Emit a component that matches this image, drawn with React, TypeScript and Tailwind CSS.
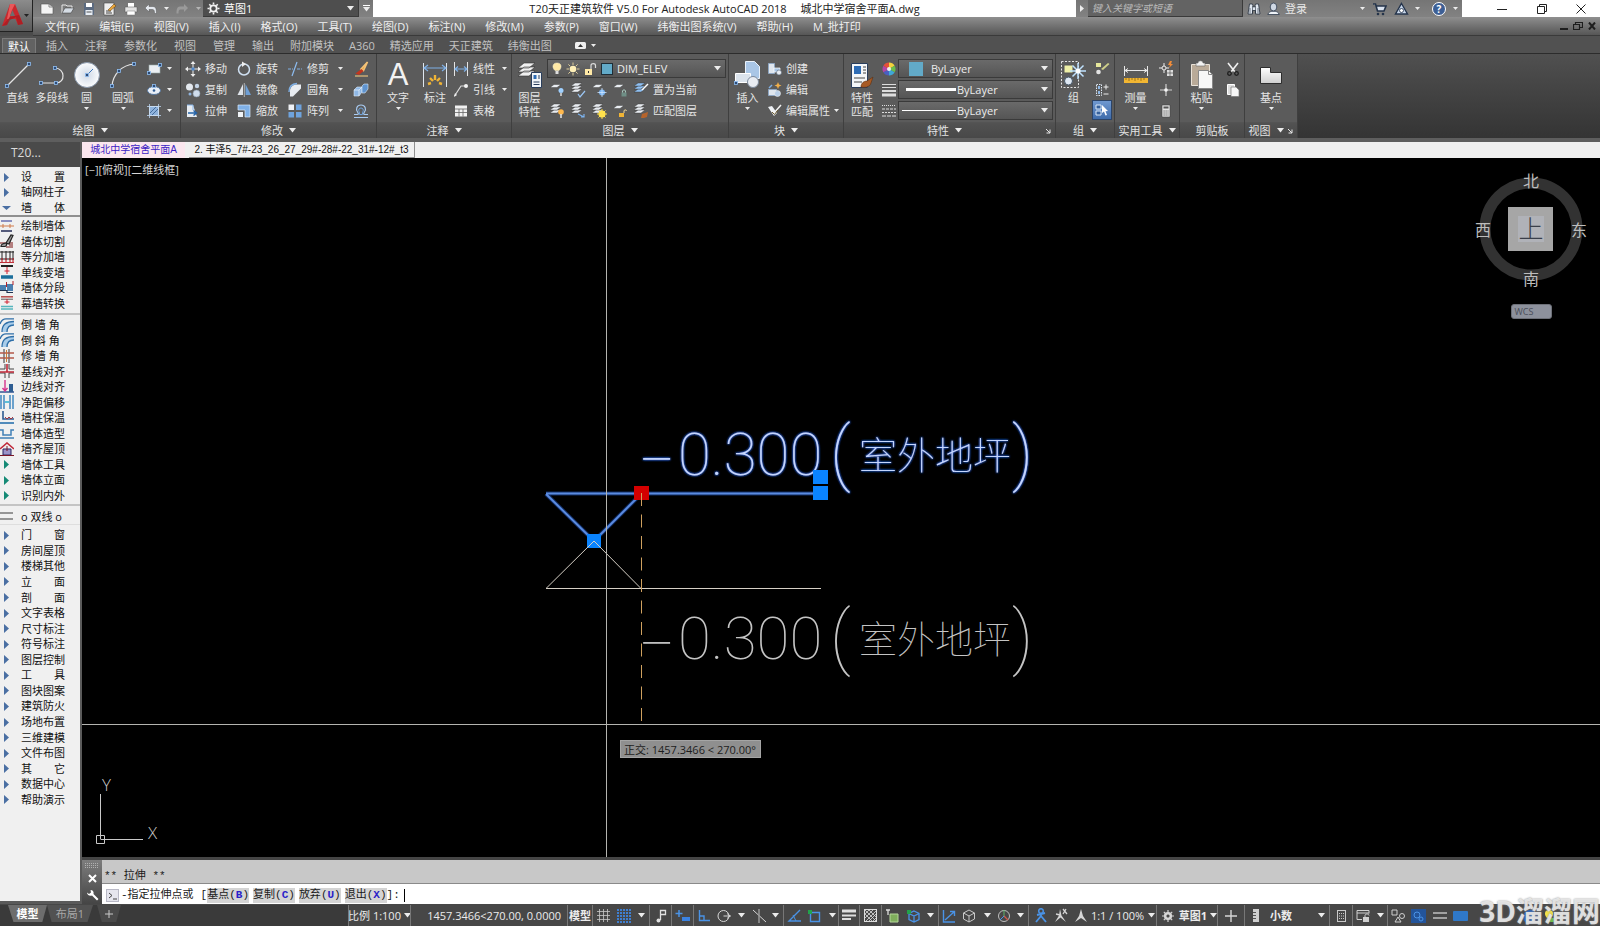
import React from "react";

type Kids = { children?: React.ReactNode };

const CJK = "font-['Open_Sans','Noto_Sans_CJK_SC',sans-serif]";

function Svg({ w = 16, h = 16, vb, children }: Kids & { w?: number; h?: number; vb?: string }) {
  return (
    <svg width={w} height={h} viewBox={vb ?? `0 0 ${w} ${h}`} fill="none" className="shrink-0" aria-hidden="true">
      {children}
    </svg>
  );
}

function Caret({ big = false, color = "#ececec" }: { big?: boolean; color?: string }) {
  return big ? (
    <Svg w={7} h={5}><path d="M0 0h7L3.500 4.500z" fill={color} /></Svg>
  ) : (
    <Svg w={5} h={3}><path d="M0 0h5L2.500 3z" fill={color} /></Svg>
  );
}

/* ---------- quick access and title icons ---------- */

const IcNew = <Svg w={14} h={14}><path d="M1 2h8l4 3v7H1z" fill="#f4f4f4" stroke="#555" strokeWidth=".6" /><path d="M9 2v3h4" stroke="#888" /></Svg>;
const IcOpen = <Svg w={14} h={14}><path d="M1 11V3h4l1 1h5v2" stroke="#e8e8e8" /><path d="M1 11l3-5h9l-3 5z" fill="#d5dce4" stroke="#333" strokeWidth=".5" /></Svg>;
const IcSave = <Svg w={14} h={14}><path d="M2 1h10v12H2z" fill="#5c6b80" /><path d="M4 1h6v4H4z" fill="#fff" /><path d="M3.500 8h7v5h-7z" fill="#e8eef5" /><path d="M4.500 10h5" stroke="#555" /></Svg>;
const IcSaveAs = <Svg w={14} h={14}><path d="M1 1h10v12H1z" fill="#eee" stroke="#444" strokeWidth=".6" /><path d="M3 9h5M3 11h6" stroke="#444" /><path d="M5 8l6-6 2 2-6 5z" fill="#e8a43a" stroke="#5b3b10" strokeWidth=".5" /></Svg>;
const IcPrint = <Svg w={14} h={14}><path d="M4 1h6v4H4z" fill="#fff" /><path d="M1 5h12v5H1z" fill="#e3e3e3" stroke="#555" strokeWidth=".5" /><path d="M3 9h8v4H3z" fill="#fff" stroke="#777" strokeWidth=".5" /></Svg>;
const IcUndo = <Svg w={14} h={12}><path d="M1 5l4-4v2.500h4c3 0 3.500 3 3.500 7h-2c0-3-.5-4-2-4H5V9z" fill="#e4e8ee" stroke="#555" strokeWidth=".5" /></Svg>;
const IcRedo = <Svg w={14} h={12}><path d="M13 5L9 1v2.500H5c-3 0-3.500 3-3.500 7h2c0-3 .5-4 2-4H9V9z" fill="#9a9a9a" /></Svg>;
const IcGear = (
  <Svg w={13} h={13}>
    <circle cx="6.500" cy="6.500" r="3.200" stroke="#f2f2f2" strokeWidth="1.800" />
    <path d="M6.500 .5v2M6.500 10.500v2M.5 6.500h2M10.500 6.500h2M2.300 2.300l1.400 1.400M9.300 9.300l1.400 1.400M10.700 2.300L9.300 3.700M3.700 9.300l-1.400 1.400" stroke="#f2f2f2" strokeWidth="1.600" />
  </Svg>
);
const IcBinoc = <Svg w={14} h={14}><path d="M2.500 2h3l.8 3h1.400l.8-3h3l1.500 10H8.500V8.500h-3V12H1z" fill="#dfe6ef" stroke="#26303d" strokeWidth=".8" /><path d="M5.500 4v7M8.500 4v7M3 6v5M11 6v5" stroke="#26303d" strokeWidth=".6" /></Svg>;
const IcUser = <Svg w={13} h={14}><ellipse cx="6.500" cy="5" rx="3.300" ry="4" fill="#cfd8e4" stroke="#2d3a4c" strokeWidth=".8" /><path d="M.8 12.500c.5-2 2.500-3 4-3.200h3.400c1.500.2 3.500 1.200 4 3.200z" fill="#eef2f7" stroke="#2d3a4c" strokeWidth=".8" /></Svg>;
const IcCart = <Svg w={15} h={14}><path d="M1 2h2.500l2 7h6.500l2-5H4.500" stroke="#243349" strokeWidth="1.600" fill="#d9e2ee" /><circle cx="6" cy="12" r="1.300" fill="#243349" /><circle cx="11" cy="12" r="1.300" fill="#243349" /></Svg>;
const IcA360 = <Svg w={15} h={14}><path d="M7.500 1.500L13.500 12h-12z" stroke="#24344c" strokeWidth="1.400" fill="#c7d6ea" /><circle cx="7.500" cy="8.500" r="2" fill="#fff" stroke="#24344c" strokeWidth=".8" /></Svg>;
const IcHelp = <span className="flex size-[14px] items-center justify-center rounded-full border border-white bg-[#3d5f95] text-[10px] font-bold leading-none text-white">?</span>;

function QA({ w, label, children }: Kids & { w: string; label: string }) {
  return (
    <button aria-label={label} className={`flex h-full shrink-0 items-center justify-center ${w}`}>
      {children}
    </button>
  );
}

const MENUS = ["文件(F)", "编辑(E)", "视图(V)", "插入(I)", "格式(O)", "工具(T)", "绘图(D)", "标注(N)", "修改(M)", "参数(P)", "窗口(W)", "纬衡出图系统(V)", "帮助(H)", "M_批打印"];

function Header() {
  return (
    <header className="flex h-9 shrink-0 bg-[#4b4b4b]">
      <button aria-label="应用程序菜单" className="flex h-8 w-[33px] shrink-0 items-center gap-px border-r border-b border-[#222] bg-linear-to-b from-[#8c8c8c] to-[#5a5a5a] pl-px">
        <Svg w={22} h={26}>
          <path d="M1 23L9 1h5l8 20-5 1-2.500-6H8l-2 6z" fill="#c8282d" />
          <path d="M9 1h5l-3 6-3 9H6z" fill="#e8585a" />
          <path d="M11.500 7l2.500 6H9z" fill="#6e6e6e" />
          <path d="M1 23l5-1 3-5 6-3 2 8 5-1-4-9-9 2z" fill="#a3191f" opacity=".65" />
        </Svg>
        <Caret color="#222" />
      </button>
      <div className="flex min-w-0 flex-1 flex-col">
        <div className="flex h-[17px] bg-white">
          <div className="flex w-[340px] shrink-0 items-center bg-linear-to-b from-[#757575] to-[#828282] pl-1">
            <QA w="w-5" label="新建">{IcNew}</QA>
            <QA w="w-[22px]" label="打开">{IcOpen}</QA>
            <QA w="w-5" label="保存">{IcSave}</QA>
            <QA w="w-[22px]" label="另存为">{IcSaveAs}</QA>
            <QA w="w-5" label="打印">{IcPrint}</QA>
            <QA w="w-5" label="放弃">{IcUndo}</QA>
            <QA w="w-[10px]" label="放弃列表"><Caret /></QA>
            <QA w="w-[22px]" label="重做">{IcRedo}</QA>
            <QA w="w-[10px]" label="重做列表"><Caret color="#b5b5b5" /></QA>
            <div className="flex h-full flex-1 items-center gap-1 border-r border-b border-[#3a3a3a] bg-[#4e4e4e] pr-1 pl-1">
              {IcGear}
              <select aria-label="工作空间" className="min-w-0 flex-1 appearance-none bg-transparent text-[11px] leading-none text-white">
                <option>草图1</option>
              </select>
              <Caret big />
            </div>
            <QA w="w-[14px]" label="自定义快速访问工具栏">
              <span className="flex flex-col items-center gap-px"><span className="h-px w-[7px] bg-white" /><Caret big /></span>
            </QA>
          </div>
          <h1 className="flex min-w-0 flex-1 items-center justify-center gap-[14px] overflow-hidden text-[11px] leading-none whitespace-nowrap text-[#222]">
            <span>T20天正建筑软件 V5.0 For Autodesk AutoCAD 2018</span>
            <span>城北中学宿舍平面A.dwg</span>
          </h1>
          <div className="flex w-[386px] shrink-0 items-center bg-linear-to-b from-[#757575] to-[#828282] text-[11px] text-[#e8e8e8]">
            <QA w="w-3" label="收拢搜索"><Svg w={4} h={7}><path d="M0 0l4 3.500L0 7z" fill="#eee" /></Svg></QA>
            <input aria-label="搜索" placeholder="键入关键字或短语" className="h-full w-[155px] border-r border-b border-[#3a3a3a] bg-[#636363] px-1 text-[10px] italic placeholder:text-[#b9b9b9]" />
            <QA w="w-[22px]" label="查找">{IcBinoc}</QA>
            <button className="flex h-full w-[100px] items-center gap-[5px] pl-0.5 leading-none">{IcUser}<span className="flex-1 text-left">登录</span><Caret /></button>
            <QA w="w-7" label="应用商店">{IcCart}</QA>
            <QA w="w-[16px]" label="A360">{IcA360}</QA>
            <QA w="w-[16px]" label="A360 列表"><Caret /></QA>
            <QA w="w-7" label="帮助">{IcHelp}</QA>
            <Caret />
          </div>
          <div className="flex w-[138px] shrink-0 items-center justify-between bg-white pr-[14px] pl-[35px]">
            <button aria-label="最小化"><Svg w={10} h={10}><path d="M0 5.500h10" stroke="#222" /></Svg></button>
            <button aria-label="还原"><Svg w={10} h={10}><path d="M.5 2.500h7v7h-7zM2.500 2.500v-2h7v7h-2" stroke="#222" /></Svg></button>
            <button aria-label="关闭"><Svg w={10} h={10}><path d="M.5 .5l9 9M9.500 .5l-9 9" stroke="#222" /></Svg></button>
          </div>
        </div>
        <nav className="flex h-[19px] items-center gap-5 border-b border-[#3a3a3a] bg-linear-to-b from-[#8f8f8f] to-[#565656] pl-3 text-[11px] leading-none whitespace-nowrap text-[#f0f0f0]">
          {MENUS.map((m) => (<button key={m} className="leading-none">{m}</button>))}
          <div className="ml-auto flex items-center gap-[5px] pr-1">
            <button aria-label="最小化图形"><Svg w={9} h={9}><path d="M1 7h8" stroke="#1e1e1e" strokeWidth="2" /></Svg></button>
            <button aria-label="还原图形"><Svg w={10} h={10}><path d="M.5 3.500h6v5h-6zM2.500 3.500v-2h7v5h-3" stroke="#1e1e1e" strokeWidth="1.200" /></Svg></button>
            <button aria-label="关闭图形"><Svg w={8} h={8}><path d="M1 .5l6 7M7 .5l-6 7" stroke="#1e1e1e" strokeWidth="2" /></Svg></button>
          </div>
        </nav>
      </div>
    </header>
  );
}

/* ---------- ribbon ---------- */

const TABS = ["插入", "注释", "参数化", "视图", "管理", "输出", "附加模块", "A360", "精选应用", "天正建筑", "纬衡出图"];

function RibbonTabs() {
  return (
    <div role="tablist" className="flex h-[18px] shrink-0 items-end border-b border-[#2c2c2c] bg-[#515151] pl-0.5 text-[11px] leading-none whitespace-nowrap text-[#c2c2c2]">
      <button role="tab" aria-selected="true" className="flex h-[15px] w-[34px] items-center justify-center border border-b-0 border-[#7a7a7a] bg-[#626262] text-white">默认</button>
      <div className="flex h-[15px] items-center gap-[15px] pl-[10px]">
        {TABS.map((t) => (<button key={t} role="tab" aria-selected="false" className="px-px leading-none first:pl-0">{t}</button>)).slice(0, 6)}
        {TABS.slice(6).map((t) => (<button key={t} role="tab" aria-selected="false" className="leading-none">{t}</button>))}
        <button aria-label="最小化功能区" className="flex items-center gap-[5px] pl-2">
          <Svg w={11} h={7}><rect width="11" height="7" rx="1.500" fill="#f0f0f0" /><path d="M3 5l2.500-3L8 5z" fill="#333" /></Svg>
          <Caret />
        </button>
      </div>
    </div>
  );
}

function Panel({ w, title, caret = true, corner = false, children }: Kids & { w: string; title: string; caret?: boolean; corner?: boolean }) {
  return (
    <section aria-label={title} className={`flex shrink-0 flex-col border-r border-[#3f3f3f] bg-[#5b5b5b] ${w}`}>
      <div className="flex h-[68px] pt-1">{children}</div>
      <div className="flex h-4 items-center border-t border-[#545454] bg-linear-to-b from-[#525252] to-[#484848] text-[11px] leading-none text-[#e4e4e4]">
        <span className="flex flex-1 items-center justify-center gap-[6px] whitespace-nowrap">{title}{caret && <Caret big />}</span>
        {corner && <button aria-label={`${title}设置`} className="pr-1"><Svg w={6} h={6}><path d="M1 1l4 4M5 1.500V5H1.500" stroke="#e8e8e8" /></Svg></button>}
      </div>
    </section>
  );
}

function Big({ w, label, icon, caret = false }: { w: string; label: string[]; icon: React.ReactNode; caret?: boolean }) {
  return (
    <button className={`flex shrink-0 flex-col items-center text-[11px] leading-[14px] text-[#e6e6e6] ${w}`}>
      <span className="flex h-[33px] items-center justify-center">{icon}</span>
      {label.map((l) => (<span key={l} className="whitespace-nowrap">{l}</span>))}
      {caret && <span className="pt-[2px]"><Caret /></span>}
    </button>
  );
}

function Row({ icon, label, caret = false, w = "" }: { icon: React.ReactNode; label?: string; caret?: boolean; w?: string }) {
  return (
    <button aria-label={label ?? "工具"} className={`flex h-[21px] shrink-0 items-center gap-1 text-[11px] leading-none whitespace-nowrap text-[#e6e6e6] ${w}`}>
      {icon}
      {label && <span>{label}</span>}
      {caret && <span className="ml-auto"><Caret /></span>}
    </button>
  );
}

const Col = ({ w = "", children }: Kids & { w?: string }) => <div className={`flex shrink-0 flex-col ${w}`}>{children}</div>;

const BL = "#7fb0e6";
const grip = (x: number, y: number) => <rect x={x - 1.5} y={y - 1.5} width="3" height="3" fill="#2d4c78" stroke="#8fbdf0" strokeWidth=".8" />;

const BiLine = <Svg w={28} h={28}><path d="M3 25L25 3" stroke="#e4e4e4" strokeWidth="1.200" />{grip(3, 25)}{grip(25, 3)}</Svg>;
const BiPoly = <Svg w={28} h={28}><path d="M3 22h15c10 0 9-15-1-15" stroke="#e4e4e4" strokeWidth="1.200" />{grip(3, 22)}{grip(18, 22)}{grip(17, 7)}</Svg>;
const BiCircle = (
  <Svg w={28} h={28}>
    <defs><radialGradient id="ball"><stop offset="0" stopColor="#cfd9e6" /><stop offset="1" stopColor="#fbfcfd" /></radialGradient></defs>
    <circle cx="14" cy="14" r="12.500" fill="url(#ball)" stroke="#8796aa" />
    <path d="M14 14l6-6" stroke="#3c74b8" />{grip(14, 14)}
  </Svg>
);
const BiArc = <Svg w={28} h={28}><path d="M3 25C4 13 13 4 25 3" stroke="#e4e4e4" strokeWidth="1.200" />{grip(3, 25)}{grip(10, 10)}{grip(25, 3)}</Svg>;
const SiRect = <Svg><rect x="3" y="4" width="11" height="8" fill="#eceff3" stroke="#9aa" strokeWidth=".6" />{grip(3, 12)}{grip(14, 4)}</Svg>;
const SiEllipse = <Svg><ellipse cx="8" cy="8.500" rx="6.500" ry="4" fill="#e8eef6" stroke="#56779f" /><circle cx="8" cy="8.500" r="1.300" fill="#2f5b93" />{grip(8, 4)}</Svg>;
const SiHatch = <Svg><rect x="3.500" y="3.500" width="9" height="9" fill="#8fb3dd" stroke="#e8eef6" /><path d="M1 3.500h14M3.500 1v14M12.500 1v14M1 12.500h14" stroke="#bcd4ef" strokeWidth=".8" /><path d="M4 10l6-6M6 12l6-6" stroke="#325a8c" strokeWidth=".8" /></Svg>;

const SiMove = <Svg><path d="M8 1v14M1 8h14" stroke="#eee" /><path d="M8 0l2.500 3h-5zM8 16l2.500-3h-5zM0 8l3-2.500v5zM16 8l-3-2.500v5z" fill="#eee" /><rect x="6.500" y="6.500" width="3" height="3" fill="#4e86c8" /></Svg>;
const SiRotate = <Svg><circle cx="8" cy="8.500" r="5.500" stroke="#cfe0f2" strokeWidth="1.500" /><path d="M6 .5l4 2.500-4 3z" fill="#eee" /></Svg>;
const SiTrim = <Svg><path d="M1 8h5M10 8h5" stroke="#7fb0e6" strokeWidth="1.200" strokeDasharray="3 1" /><path d="M10 1L5 15" stroke="#8dbcf0" strokeWidth="1.200" /></Svg>;
const SiErase = <Svg><path d="M14.500 1L8 8l2.500 1.500z" fill="#e8a13a" stroke="#f3c277" strokeWidth="1.600" /><path d="M8.500 8l-6 4.500 3.500 1.500 4.500-4z" fill="#c4351d" /><path d="M2 15h13" stroke="#e8c07b" strokeWidth="1.200" /></Svg>;
const SiCopy = <Svg><circle cx="4.500" cy="5" r="3.500" fill="#e4e9ef" /><circle cx="12" cy="4" r="2.200" fill="#c5d4e6" /><circle cx="11.500" cy="11.500" r="3.500" fill="#cfdcec" stroke="#89a" strokeWidth=".6" /><circle cx="5" cy="12" r="1.500" fill="#8fb3dd" /></Svg>;
const SiMirror = <Svg><path d="M7 2v11H1.500z" fill="#dfe4ea" /><path d="M9.500 2v11H15z" fill="#6f9fd4" /><path d="M8.300 1v14" stroke="#eee" strokeWidth=".6" /></Svg>;
const SiFillet = <Svg><path d="M3 14.500V9c0-4 3-6.500 6.500-6.500H14v4L6 14.500z" fill="#e8ecf1" /><path d="M2 10C2 5 5 1.800 10 1.500" stroke={BL} strokeWidth="1.400" /></Svg>;
const SiExplode = <Svg><path d="M1 8l3-3h5v5l-3 4H1z" fill="#8fb8e6" stroke="#dce9f7" strokeWidth=".6" /><path d="M1 8h5v6M6 8l3-3" stroke="#eef5fc" strokeWidth=".7" /><path d="M9 4l2-2h4v5l-3 4H9z" fill="#5f94d0" stroke="#dce9f7" strokeWidth=".6" /></Svg>;
const SiStretch = <Svg><path d="M2 2h6l4 12H2z" fill="#e7ecf2" /><path d="M3 10h8M8.500 7.500l3 2.500-3 2.500" stroke="#2563a8" strokeWidth="1.500" /><path d="M2 2h6v5" stroke="#88b5e8" /></Svg>;
const SiScale = <Svg><path d="M2 2h12v12H9V7H2z" fill="#7fb0e6" stroke="#d9e8f8" strokeWidth=".7" /><path d="M2 9h5v5H2z" fill="#f0f3f6" /></Svg>;
const SiArray = <Svg><path d="M1.500 1.500h5.500v5.500H1.500z" fill="#eef1f5" /><path d="M9 1.500h5.500v5.500H9zM1.500 9h5.500v5.500H1.500zM9 9h5.500v5.500H9z" fill="#6fa3dd" /></Svg>;
const SiOffset = <Svg><path d="M1 14.500h14M1 11.500h3.500c1 0 1-1 .3-2C2 6 4 2 8 2s6 4 3.200 7.500c-.7 1-.7 2 .3 2H15" stroke="#a9cbf1" strokeWidth="1.200" /><path d="M6.500 11.500C7 9 5 8 6 6c.8-1.300 3.200-1.300 4 0 1 2-1 3-.5 5.500z" stroke="#6fa3dd" /></Svg>;

const BiText = <span className="font-['Liberation_Sans',sans-serif] text-[31px] leading-none text-[#f2f2f2]">A</span>;
const BiDim = <Svg w={28} h={28}><path d="M2.500 2v24M25.500 2v24" stroke="#dfe7ef" /><path d="M3 7h22M7 4L3 7l4 3M21 4l4 3-4 3" stroke="#7fb0e6" strokeWidth="1.200" /><path d="M14 14v5M9 17l3 3M19 17l-3 3M7 23l3-1M21 23l-3-1" stroke="#f0b435" strokeWidth="2.400" /></Svg>;
const SiLinear = <Svg><path d="M1.500 1v14M14.500 1v14" stroke="#e4e4e4" /><path d="M2 8h12M5 5.500L2 8l3 2.500M11 5.500L14 8l-3 2.500" stroke="#7fb0e6" strokeWidth="1.200" /></Svg>;
const SiLeader = <Svg><path d="M1.500 14L8 4h4" stroke="#dcdcdc" strokeWidth="1.200" /><path d="M1 15l1-4 2 2z" fill="#eee" /><circle cx="13" cy="4" r="2" fill="#f4f4f4" /></Svg>;
const SiTable = <Svg><path d="M2 2.500h12v11H2z" fill="#f2f2f2" /><path d="M2 6h12M2 9.500h12M6 6v7.500M10 6v7.500" stroke="#666" strokeWidth=".8" /></Svg>;

const sheets = (c: string, dx = 0, dy = 0) => (
  <g fill={c} stroke="#333" strokeWidth=".4">
    <path d={`M${dx} ${dy + 10}l4-3h7l-4 3z`} /><path d={`M${dx} ${dy + 7}l4-3h7l-4 3z`} /><path d={`M${dx} ${dy + 4}l4-3h7l-4 3z`} />
  </g>
);
const BiLayers = (
  <Svg w={28} h={30}>
    <g fill="#f0f0f0" stroke="#333" strokeWidth=".6"><path d="M2 16l6-5h11l-6 5zM2 12l6-5h11l-6 5zM2 8l6-5h11l-6 5z" /></g>
    <path d="M15.500 12.500h10v15h-10z" fill="#f2f5f8" stroke="#2a3e5c" /><path d="M17.500 15h3v4h-3z" fill="#2e6cb5" /><path d="M22 16h2M22 18h2M17.500 22h6M17.500 24.500h6" stroke="#2a3e5c" />
  </Svg>
);
const IcBulb = <Svg w={10} h={14}><path d="M5 1c5 0 5 5 2 7.500H3C0 6 0 1 5 1z" fill="#ffe9a6" stroke="#fff4cf" strokeWidth=".5" /><path d="M3.500 9h3v3h-3z" fill="#ddd" /></Svg>;
const IcSun = <Svg w={14} h={14}><circle cx="7" cy="7" r="3.300" fill="#fff0b8" /><path d="M7 .5v2.500M7 11v2.500M.5 7H3M11 7h2.500M2.400 2.400l1.700 1.700M9.900 9.900l1.700 1.700M11.600 2.400L9.900 4.100M4.100 9.900l-1.700 1.700" stroke="#e0cf9b" /></Svg>;
const IcLock = <Svg w={13} h={14}><path d="M1 7h7v6H1z" fill="#ffe9a6" /><path d="M7 7V3.500c0-2.500 4.500-2.500 4.500 0V6" stroke="#ddd" strokeWidth="1.200" /><path d="M4.500 9v2" stroke="#333" /></Svg>;
const lay = (badge: React.ReactNode, c = "#e9edf2") => <Svg>{sheets(c, 1, 0)}{badge}</Svg>;
const flat = (badge: React.ReactNode) => <Svg><path d="M1 5.500l4-3h7l-4 3z" fill="#e9edf2" stroke="#333" strokeWidth=".4" />{badge}</Svg>;
const L1 = flat(<><circle cx="12" cy="8.500" r="2.500" fill="#9fd0ff" /><path d="M12 11v3" stroke="#ddd" strokeWidth="1.500" /></>);
const L2 = lay(<path d="M8 12l2 3 5-6" stroke="#9cc7f5" strokeWidth="1.200" />);
const L3 = flat(<><circle cx="11" cy="10.500" r="3" fill="#79b4f2" /><path d="M11 6v9M6.500 10.500h9" stroke="#cfe6ff" strokeWidth=".8" /></>);
const L4 = flat(<><path d="M9.500 10.500h5v4h-5z" fill="#6f8f86" /><path d="M10.500 10.500V9c0-1.500 3-1.500 3 0v1.500" stroke="#a8c9bf" /></>);
const L5 = lay(<path d="M9 8l6-6" stroke="#fff" strokeWidth="1.500" />, "#8fc0f2");
const L6 = lay(<><circle cx="12" cy="9" r="2.800" fill="#ffb84d" /><path d="M12 11v4" stroke="#e8e8e8" strokeWidth="1.500" /></>);
const L7 = lay(<path d="M8 11l6 3M14 11v3h-3" stroke="#7db3ee" strokeWidth="1.200" />);
const L8 = lay(<><circle cx="11" cy="11" r="3.500" fill="#ffe14d" /><path d="M11 6v10M6 11h10M7.500 7.500l7 7M14.500 7.500l-7 7" stroke="#ffe14d" /></>);
const L9 = flat(<><path d="M7 10h5v4H7z" fill="#f0b435" /><path d="M12 10V8c0-1.500 2.500-1.500 2.500 0" stroke="#f0d79a" /></>);
const L10 = lay(<path d="M8 15l1-4 6-2-1 5-3 1z" fill="#b5642c" />);

const BiInsert = <Svg w={28} h={30}><path d="M11.500 1.500h9l5 5v12h-14z" fill="#a9c6e6" stroke="#eaf2fb" /><path d="M1.500 13.500h15v9h-15z" fill="#dbe3ec" stroke="#fff" /><circle cx="19" cy="22" r="5.500" fill="#e8ecf2" stroke="#7c8a9c" />{grip(2, 23)}</Svg>;
const SiCreate = <Svg><path d="M2.500 2.500h6v10h-6z" fill="#dfe6ee" stroke="#8ea6c2" /><path d="M8 7h6v4H8z" fill="#a9c6e6" stroke="#fff" strokeWidth=".7" /><circle cx="13" cy="11.500" r="2.500" fill="#e8ecf2" stroke="#567" strokeWidth=".6" /></Svg>;
const SiEdit = <Svg><path d="M2.500 7.500h8v6h-8z" fill="#dfe6ee" stroke="#8ea6c2" /><circle cx="11.500" cy="11.500" r="3" fill="#b9cfe8" stroke="#eee" strokeWidth=".6" /><path d="M12 0l1 2.500 2.500 1L13 4.500 12 7l-1-2.500-2.500-1 2.500-1z" fill="#f2b04a" /><path d="M3 6l3-3" stroke="#7fb0e6" strokeWidth="1.500" /></Svg>;
const SiAttr = <Svg><path d="M2 4l6 9 3-3-5-7z" fill="#eef1f5" /><path d="M5 7l3 3 7-8" stroke="#f4f4f4" strokeWidth="1.500" /><path d="M6 9l2.500 2.500L12 7" stroke="#6c5a2e" /></Svg>;

const BiProps = <Svg w={28} h={30}><path d="M3.500 3.500h16v24h-16z" fill="#f4f6f8" stroke="#2a3e5c" /><path d="M6 6h7v8H6z" fill="#2e6cb5" /><path d="M15 7h3M15 10h3M15 13h3M6 18h11M6 22h8" stroke="#444" /><path d="M13 27c0-4 3-6 6-6l6-4-2 6c-1 4-6 5-10 4z" fill="#a85a24" stroke="#5d2f10" strokeWidth=".6" /></Svg>;
const SiWheel = (
  <Svg w={14} h={14}>
    <path d="M7 7V.5A6.500 6.500 0 0 1 12.600 3.700z" fill="#f3d33c" /><path d="M7 7l5.600-3.300a6.500 6.500 0 0 1 0 6.500z" fill="#6abf4b" /><path d="M7 7l5.600 3.200A6.500 6.500 0 0 1 7 13.500z" fill="#3fa7d6" />
    <path d="M7 7v6.500a6.500 6.500 0 0 1-5.600-3.200z" fill="#4a5fc0" /><path d="M7 7l-5.600 3.300a6.500 6.500 0 0 1 0-6.600z" fill="#b247a8" /><path d="M7 7L1.400 3.700A6.500 6.500 0 0 1 7 .5z" fill="#e4503a" /><circle cx="7" cy="7" r="2" fill="#eee" />
  </Svg>
);
const SiWeights = <Svg w={14} h={14}><path d="M0 1.500h14M0 4.500h14" stroke="#ddd" /><path d="M0 8h14" stroke="#ddd" strokeWidth="2" /><path d="M0 12h14" stroke="#ddd" strokeWidth="3" /></Svg>;
const SiTypes = <Svg w={14} h={14}><path d="M0 1.500h14" stroke="#ddd" strokeDasharray="1 1" /><path d="M0 5h14" stroke="#ddd" strokeDasharray="3 1" /><path d="M0 8.500h14" stroke="#ddd" strokeDasharray="2 1" /><path d="M0 12h14" stroke="#ddd" strokeDasharray="4 1" /></Svg>;

const BiGroup = (
  <Svg w={28} h={30}>
    <path d="M1.500 1.500h17v26h-17z" stroke="#e4e4e4" strokeDasharray="2 1.500" /><path d="M4 5h9v8H4z" fill="#eef0a8" stroke="#555" /><circle cx="8.500" cy="21" r="4" fill="#dfe9f4" stroke="#456" />
    <path d="M18 3v16M10 11h16M12.500 5.500l11 11M23.500 5.500l-11 11" stroke="#bfe2ff" strokeWidth="1.500" /><circle cx="18" cy="11" r="2.500" fill="#fff" />
  </Svg>
);
const SiG1 = <Svg><path d="M2 2h5v4H2z" fill="#e6e79b" /><circle cx="4.500" cy="11" r="2.300" fill="#e4e4e4" /><path d="M7 8l7-6 1.500 1L9 9z" fill="#cfd08a" /></Svg>;
const SiG2 = <Svg><path d="M2.500 2.500h5v11h-5z" stroke="#dfe9f4" strokeDasharray="1.500 1" /><path d="M4 4h2v3H4zM4 9h2v3H4z" fill="#8fb8e6" /><path d="M9.500 5h5M12 2.500v5M9.500 12h5" stroke="#eee" /></Svg>;
const SiG3 = <Svg><path d="M2 3h5v4H2zM2 9h5v4H2z" stroke="#dbe9fa" fill="#35609c" /><path d="M8 3l6 6-2.500.3L13 13l-1.500.5-1.500-4L8 11z" fill="#fff" /></Svg>;
const BiMeasure = <Svg w={28} h={28}><path d="M2.500 5v10M25.500 5v10" stroke="#e8e8e8" /><path d="M3 9.500h22M6 7.500l-3 2 3 2M22 7.500l3 2-3 2" stroke="#e8e8e8" /><path d="M2 17h24v5H2z" fill="#f2b632" /><path d="M4 17v2M7 17v3M10 17v2M13 17v3M16 17v2M19 17v3M22 17v2" stroke="#7d5a10" strokeWidth=".7" /></Svg>;
const SiQuick = <Svg><path d="M6 2v10M1 7h10" stroke="#eee" /><circle cx="6" cy="7" r="2" fill="#5b5b5b" stroke="#eee" /><path d="M12 0l-2 4h2l-1 3 4-4h-2l1-3z" fill="#f08c3a" /><path d="M9 9h6v6H9z" fill="#ddd" /><path d="M9 12h6M12 9v6" stroke="#555" strokeWidth=".7" /></Svg>;
const SiPoint = <Svg><path d="M8 2v12M2 8h12" stroke="#cfcfcf" strokeWidth="1.200" /><circle cx="8" cy="8" r="1.800" fill="#f4f4f4" /></Svg>;
const SiCalc = <Svg><path d="M4 2h8v12H4z" fill="#e4e4e4" stroke="#444" strokeWidth=".6" /><path d="M5.500 3.500h5v2h-5z" fill="#555" /><path d="M5.500 8h5M5.500 10h5M5.500 12h5" stroke="#555" strokeDasharray="1.200 .8" /></Svg>;
const BiPaste = <Svg w={28} h={30}><path d="M3.500 4.500h18v21h-18z" fill="#b9aa98" stroke="#e9e2d8" /><path d="M8 6V3h2c0-3 5-3 5 0h2v3z" fill="#f2f2f2" stroke="#666" strokeWidth=".6" /><path d="M10.500 10.500h10l4 4v14h-14z" fill="#f7f7f7" stroke="#888" /><path d="M20.500 10.500v4h4" stroke="#888" /></Svg>;
const SiCut = <Svg><path d="M3 2l7 9M13 2L6 11" stroke="#f0f0f0" strokeWidth="1.600" /><circle cx="4.500" cy="12.500" r="1.800" stroke="#1e1e1e" strokeWidth="1.300" /><circle cx="11.500" cy="12.500" r="1.800" stroke="#1e1e1e" strokeWidth="1.300" /></Svg>;
const SiClip = <Svg><path d="M2.500 2.500h7v10h-7z" fill="#ddd" stroke="#fff" /><path d="M6 5h5l3 3v6.500H6z" fill="#f7f7f7" stroke="#777" strokeWidth=".7" /></Svg>;
const BiBase = <Svg w={28} h={28}><defs><linearGradient id="bs" x2="0" y2="1"><stop stopColor="#fff" /><stop offset="1" stopColor="#cfcfcf" /></linearGradient></defs><path d="M3.500 6.500h10v5h11v11h-21z" fill="url(#bs)" stroke="#2d2d2d" /></Svg>;

const SEL = "h-[17px] min-w-0 flex-1 appearance-none bg-transparent text-[11px] leading-[17px] text-[#ececec]";
const BOX = "flex h-[19px] w-full items-center border border-[#3a3a3a] bg-linear-to-b from-[#6a6a6a] to-[#555] pr-1";

function Ribbon() {
  return (
    <div className="flex h-[88px] shrink-0 flex-col border-b-4 border-[#5e5e5e] bg-linear-to-b from-[#505050] to-[#343434]">
      <div className="flex flex-1">
        <Panel w="w-[181px]" title="绘图">
          <Big w="w-[35px]" label={["直线"]} icon={BiLine} />
          <Big w="w-[34px]" label={["多段线"]} icon={BiPoly} />
          <Big w="w-[35px]" label={["圆"]} icon={BiCircle} caret />
          <Big w="w-[38px]" label={["圆弧"]} icon={BiArc} caret />
          <Col w="w-[30px] pl-1">
            <Row icon={SiRect} caret /><Row icon={SiEllipse} caret /><Row icon={SiHatch} caret />
          </Col>
        </Panel>
        <Panel w="w-[196px]" title="修改">
          <Col w="w-[55px] pl-1"><Row icon={SiMove} label="移动" /><Row icon={SiCopy} label="复制" /><Row icon={SiStretch} label="拉伸" /></Col>
          <Col w="w-[51px]"><Row icon={SiRotate} label="旋转" /><Row icon={SiMirror} label="镜像" /><Row icon={SiScale} label="缩放" /></Col>
          <Col w="w-[64px] pr-2"><Row icon={SiTrim} label="修剪" caret /><Row icon={SiFillet} label="圆角" caret /><Row icon={SiArray} label="阵列" caret /></Col>
          <Col w="pl-0.5"><Row icon={SiErase} /><Row icon={SiExplode} /><Row icon={SiOffset} /></Col>
        </Panel>
        <Panel w="w-[135px]" title="注释">
          <Big w="w-[42px]" label={["文字"]} icon={BiText} caret />
          <Big w="w-[32px]" label={["标注"]} icon={BiDim} />
          <Col w="w-[56px] pl-0.5"><Row icon={SiLinear} label="线性" caret /><Row icon={SiLeader} label="引线" caret /><Row icon={SiTable} label="表格" /></Col>
        </Panel>
        <Panel w="w-[217px]" title="图层">
          <Big w="w-[35px]" label={["图层", "特性"]} icon={BiLayers} />
          <div className="flex flex-1 flex-col pr-0.5">
            <div className="flex h-[21px] items-center">
              <div className={`${BOX} gap-1 pl-1`}>
                {IcBulb}{IcSun}{IcLock}
                <span className="size-[12px] border border-[#1f2d36] bg-[#62aac8]" />
                <select aria-label="图层" className={SEL}><option>DIM_ELEV</option></select>
                <Caret big />
              </div>
            </div>
            <div className="flex gap-[5px] pl-0.5"><Row icon={L1} /><Row icon={L2} /><Row icon={L3} /><Row icon={L4} /><Row icon={L5} label="置为当前" /></div>
            <div className="flex gap-[5px] pl-0.5"><Row icon={L6} /><Row icon={L7} /><Row icon={L8} /><Row icon={L9} /><Row icon={L10} label="匹配图层" /></div>
          </div>
        </Panel>
        <Panel w="w-[115px]" title="块">
          <Big w="w-[37px]" label={["插入"]} icon={BiInsert} caret />
          <Col w="w-[73px]"><Row icon={SiCreate} label="创建" /><Row icon={SiEdit} label="编辑" /><Row icon={SiAttr} label="编辑属性" caret /></Col>
        </Panel>
        <Panel w="w-[212px]" title="特性" corner>
          <Big w="w-[36px]" label={["特性", "匹配"]} icon={BiProps} />
          <div className="flex w-[18px] flex-col items-center">
            {[SiWheel, SiWeights, SiTypes].map((ic, i) => (<span key={i} className="flex h-[21px] items-center">{ic}</span>))}
          </div>
          <div className="flex flex-1 flex-col pr-0.5">
            <div className="flex h-[21px] items-center">
              <div className={`${BOX} gap-2 pl-[10px]`}><span className="size-[14px] bg-[#62aac8]" /><select aria-label="对象颜色" className={SEL}><option>ByLayer</option></select><Caret big /></div>
            </div>
            <div className="flex h-[21px] items-center">
              <div className={`${BOX} gap-px pl-[7px]`}><span className="h-[3px] w-[50px] bg-white" /><select aria-label="线宽" className={SEL}><option>ByLayer</option></select><Caret big /></div>
            </div>
            <div className="flex h-[21px] items-center">
              <div className={`${BOX} gap-px pl-[3px]`}><span className="h-px w-[54px] bg-white" /><select aria-label="线型" className={SEL}><option>ByLayer</option></select><Caret big /></div>
            </div>
          </div>
        </Panel>
        <Panel w="w-[59px]" title="组">
          <Big w="w-[35px]" label={["组"]} icon={BiGroup} />
          <div className="flex w-[21px] flex-col items-center">
            <Row icon={SiG1} /><Row icon={SiG2} />
            <button aria-label="组选择" aria-pressed="true" className="flex h-5 w-5 items-center justify-center border border-[#2c4468] bg-linear-to-b from-[#6f98d0] to-[#3f6cab]">{SiG3}</button>
          </div>
        </Panel>
        <Panel w="w-[65px]" title="实用工具">
          <Big w="w-[41px]" label={["测量"]} icon={BiMeasure} caret />
          <Col w="pl-0.5"><Row icon={SiQuick} /><Row icon={SiPoint} /><Row icon={SiCalc} /></Col>
        </Panel>
        <Panel w="w-[65px]" title="剪贴板" caret={false}>
          <Big w="w-[43px]" label={["粘贴"]} icon={BiPaste} caret />
          <Col w="pl-0.5"><Row icon={SiCut} /><Row icon={SiClip} /></Col>
        </Panel>
        <Panel w="w-[53px]" title="视图" corner>
          <Big w="w-full" label={["基点"]} icon={BiBase} caret />
        </Panel>
      </div>
    </div>
  );
}

/* ---------- T20 palette ---------- */

const Tri = ({ c = "#4a6fa3" }: { c?: string }) => <Svg w={14} h={14}><path d="M4 3l5 4.500L4 12z" fill={c} /></Svg>;
const TriDown = <Svg w={14} h={14}><path d="M2 6h9l-4.500 4z" fill="#4a6fa3" /></Svg>;
const P = ({ children }: Kids) => <Svg w={14} h={14}>{children}</Svg>;
const angleWall = <P><path d="M2 14C2 7 6 3.500 14 3.500V7c-5 0-7 2-7 7z" fill="#a9cdea" /><path d="M0 6C1 3 3 .8 6 .8h8M2 14C2 7 6 3.500 14 3.500M7 14c0-5 2-7 7-7" stroke="#2f6fa8" strokeWidth="1.300" /></P>;

type Item = [string, React.ReactNode];
const blue = (s: string): Item => [s, <Tri />];
const green = (s: string): Item => [s, <Tri c="#158a75" />];

const G1: Item[] = [blue("设　　置"), blue("轴网柱子"), ["墙　　体", TriDown]];
const G2: Item[] = [
  ["绘制墙体", <P><path d="M1 2h11" stroke="#8a8fc0" strokeWidth="2" /><path d="M0 7h14M3 5v4M10 5v4" stroke="#d07a4a" /><path d="M1 12h11" stroke="#222a55" strokeWidth="1.500" /></P>],
  ["墙体切割", <P><path d="M0 9h13M6 13h7M9 11h4" stroke="#a05a5a" strokeWidth="1.400" /><path d="M1 12c0-2 4-3 5-3 1 0 1 3-1 3.500H1zM6 9l5-8 2 .5L9 10z" stroke="#222" strokeWidth="1.200" fill="#999" /></P>],
  ["等分加墙", <P><path d="M0 2h14M0 9h14" stroke="#222" /><path d="M2 1v9M6 1v9M10 1v9M13 1v9" stroke="#222" /><path d="M2 8v5M6 8v5M10 8v5M13 8v5M0 12.500h14" stroke="#c0303a" strokeWidth="1.200" /></P>],
  ["单线变墙", <P><path d="M1 1h12" stroke="#222" strokeWidth="2" /><path d="M7 2v7M4.500 6h5" stroke="#d02030" /><path d="M1 12h12" stroke="#1c6f9c" strokeWidth="3.500" /></P>],
  ["墙体分段", <P><path d="M0 4h6v5H0zM7 3h6v7H7z" fill="#4a7fb0" /><path d="M0 9.500h7v2h6" stroke="#22324f" strokeWidth="1.200" /><path d="M6.500 1v5M13 0v4" stroke="#b3202a" /></P>],
  ["幕墙转换", <P><path d="M1 .8h12" stroke="#b54848" strokeWidth="1.500" /><path d="M1 3.200h12" stroke="#333" strokeWidth=".8" /><path d="M7 3v5M4.500 6h5" stroke="#d02030" /><path d="M1 10.500h12M1 13h12" stroke="#55b5bd" strokeWidth="1.500" /></P>],
];
const G3: Item[] = [
  ["倒 墙 角", angleWall],
  ["倒 斜 角", angleWall],
  ["修 墙 角", <P><path d="M4 0v14M9 0v14" stroke="#333" /><path d="M0 4h14M0 9h14" stroke="#b3584a" strokeWidth="1.400" /><path d="M6.500 1v12" stroke="#c97c3a" /></P>],
  ["基线对齐", <P><path d="M5 0v5H0M9 0v5h5M5 14V9H0M9 14V9h5" stroke="#444" /><path d="M7 0v8M0 8h14" stroke="#c02a3a" strokeWidth="1.600" /></P>],
  ["边线对齐", <P><path d="M0 12h14" stroke="#3f5f9a" strokeWidth="1.600" /><path d="M5 0v10M2.500 8L5 11l2.500-3" stroke="#d6348e" strokeWidth="1.400" /><path d="M9 4h4v8H9z" fill="#2e5d92" /></P>],
  ["净距偏移", <P><path d="M1 0v14M4 0v14M10 0v14M13 0v14" stroke="#3f86c0" strokeWidth="1.500" /><path d="M5 7h4" stroke="#2bb0d0" strokeWidth="1.500" /></P>],
  ["墙柱保温", <P><path d="M3 0v8h11" stroke="#2f5c92" strokeWidth="1.600" /><path d="M0 12h14" stroke="#3f7fb5" strokeWidth="1.800" /><path d="M5 6l2 2 2-2 2 2 2-2" stroke="#a3343e" /></P>],
  ["墙体造型", <P><path d="M0 4h3v5h8V4h3M0 12h14" stroke="#3f7fb5" strokeWidth="1.500" /></P>],
  ["墙齐屋顶", <P><path d="M3 7h8v6H3z" fill="#9a93c9" stroke="#2a2560" /><path d="M0 7l7-6 7 6" stroke="#c02a3a" strokeWidth="1.600" /><path d="M7 4v5M0 13.500h14" stroke="#7a1626" /></P>],
  green("墙体工具"), green("墙体立面"), green("识别内外"),
];
const G4: Item[] = [["o 双线 o", <P><path d="M0 4h13M0 10h13" stroke="#777" strokeWidth="1.500" /></P>]];
const G5: Item[] = ["门　　窗", "房间屋顶", "楼梯其他", "立　　面", "剖　　面", "文字表格", "尺寸标注", "符号标注", "图层控制", "工　　具", "图块图案", "建筑防火", "场地布置", "三维建模", "文件布图", "其　　它", "数据中心", "帮助演示"].map(blue);

function Group({ items, h }: { items: Item[]; h: string }) {
  return (
    <ul className={`flex flex-col ${h}`}>
      {items.map(([t, ic]) => (
        <li key={t} className="flex min-h-0 flex-1">
          <button className="flex w-full items-center gap-[7px] text-[11px] leading-none whitespace-nowrap text-[#111]">{ic}<span>{t}</span></button>
        </li>
      ))}
    </ul>
  );
}

function Palette() {
  return (
    <aside className="flex w-[82px] shrink-0 flex-col border-r-2 border-b-[3px] border-[#5a5a5a] bg-[#f0f0f0]">
      <h2 className="flex h-[25px] items-center bg-[#4a4a4a] pb-1 pl-[11px] text-[12px] leading-none font-normal text-[#dcdcdc]">T20...</h2>
      <Group items={G1} h="mt-0.5 h-[46px]" />
      <hr className="border-t-2 border-[#8f8f8f]" />
      <Group items={G2} h="mt-px mb-[2px] h-[93px]" />
      <hr className="border-t-2 border-[#c4c4c4]" />
      <Group items={G3} h="mt-[2px] h-[186px]" />
      <hr className="mt-px border-t-2 border-[#c4c4c4]" />
      <Group items={G4} h="mt-[2px] h-4" />
      <hr className="border-[#dedede]" />
      <Group items={G5} h="mt-[2px] h-[280px]" />
    </aside>
  );
}

/* ---------- drawing area ---------- */

function Elevation({ y, selected }: { y: number; selected: boolean }) {
  return (
    <g fill={selected ? "#c3d6ff" : "#c4c4c4"} filter={selected ? "url(#glow)" : undefined} className="font-['Roboto',sans-serif] font-thin">
      <text x="556" y={y + 6} className="text-[66px]">−</text>
      <text x="596" y={y - 2} className="text-[60px]">0.300</text>
      <text x="748" y={y} className="text-[70px]">(</text>
      <text x="777" y={y - 8} className="font-['Noto_Sans_CJK_SC',sans-serif] text-[38px]">室外地坪</text>
      <text x="930" y={y} className="text-[70px]">)</text>
    </g>
  );
}

function Canvas() {
  return (
    <main className="relative min-h-0 flex-1 overflow-hidden bg-black">
      <svg className="absolute inset-0 h-full w-full" aria-label="图形">
        <defs>
          <filter id="glow" x="-5%" y="-20%" width="110%" height="140%">
            <feGaussianBlur in="SourceAlpha" stdDeviation="1.300" result="b" />
            <feFlood floodColor="#2a62e0" />
            <feComposite in2="b" operator="in" result="c" />
            <feMerge><feMergeNode in="c" /><feMergeNode in="c" /><feMergeNode in="SourceGraphic" /></feMerge>
          </filter>
        </defs>
        <Elevation y={319} selected />
        <Elevation y={503} selected={false} />
        <g stroke="#173f8f" strokeWidth="4" fill="none" opacity=".7">
          <path d="M464 336L512 383L559 336M464 335.500H738" />
        </g>
        <path d="M464 336L512 383L559 336M464 335.500H738" stroke="#5b8be0" strokeWidth="2" fill="none" />
        <g fill="#0a84ff">
          <rect x="731" y="312" width="15" height="14" /><rect x="731" y="328" width="15" height="14" /><rect x="505" y="376" width="14" height="14" />
        </g>
        <rect x="552" y="328" width="15" height="14" fill="#d40000" />
        <path d="M464 430.500L512 383L559 430.500M464 430.500H739" stroke="#d6d0c6" fill="none" />
        <path d="M559.500 335V566" stroke="#cfa15f" strokeDasharray="13 8.500" />
        <path d="M0 566.500H4000M524.500 0V2000" stroke="#b4b4b0" />
      </svg>
      <div className="absolute top-[5px] left-[3px] text-[11px] leading-[14px] text-[#d6d6d6]">[−][俯视][二维线框]</div>
      <div className="absolute top-[582px] left-[538px] flex h-[18px] w-[141px] items-center border border-[#a5a5a5] bg-[#8f8f8f] pl-[3px] text-[11px] leading-none whitespace-nowrap text-[#1d1d1d]">正交: 1457.3466 &lt; 270.00°</div>

      <div className="absolute bottom-[13px] left-[13px]">
        <svg width="68" height="80" fill="none" stroke="#c9c9c9" aria-hidden="true">
          <path d="M1.500 71.500h8v8h-8zM5.500 75V30M5.500 75.500H48" />
          <text x="7" y="27" stroke="none" fill="#c9c9c9" className="font-['Open_Sans',sans-serif] text-[17px] font-light">Y</text>
          <text x="53" y="75" stroke="none" fill="#c9c9c9" className="font-['Open_Sans',sans-serif] text-[17px] font-light">X</text>
        </svg>
      </div>

      <div className="absolute top-[10px] right-[10px] flex w-[118px] flex-col items-center">
        <svg width="118" height="124" fill="none" className="font-['Noto_Sans_CJK_SC',sans-serif] text-[16px]" aria-label="ViewCube">
          <circle cx="59" cy="61" r="46" stroke="#323232" strokeWidth="11" />
          <rect x="36" y="39" width="45" height="44" fill="#a6a6a6" />
          <rect x="46" y="48" width="26" height="26" fill="#b0b2b8" />
          <g textAnchor="middle" fill="#bdbdbd">
            <text x="59" y="19">北</text><text x="59" y="117">南</text><text x="11" y="68">西</text><text x="107" y="68">东</text>
            <text x="59" y="70" fill="#3a3f4a" className="text-[25px] font-light">上</text>
          </g>
        </svg>
        <button className="mt-[12px] flex h-[15px] w-[41px] items-center rounded-[3px] border border-[#6d7078] bg-[#8d919c] pl-[3px] text-[9px] leading-none text-[#4a4e5a]">WCS</button>
      </div>
    </main>
  );
}

function DocTabs() {
  return (
    <div role="tablist" className="flex h-4 shrink-0 bg-[#f0f0f0] font-['Liberation_Sans','Noto_Sans_CJK_SC',sans-serif] text-[10px] leading-none whitespace-nowrap text-[#111]">
      <button role="tab" aria-selected="true" className="flex h-full w-[103px] items-center justify-center bg-[#fbe7ef] text-[#3b22c4]">城北中学宿舍平面A</button>
      <button role="tab" aria-selected="false" className="ml-1 flex h-full w-[226px] items-center justify-center border-r border-b border-[#8f8f8f]">2. 丰泽5_7#-23_26_27_29#-28#-22_31#-12#_t3</button>
    </div>
  );
}

const Opt = ({ t, k }: { t: string; k: string }) => (
  <button className="bg-[#d4d4d4] leading-[15px]">{t}(<span className="font-bold text-[#2a22c8]">{k}</span>)</button>
);

function CommandLine() {
  return (
    <div className="flex h-[47px] shrink-0 border-t-[3px] border-[#454545]">
      <div className="flex w-5 shrink-0 flex-col items-center justify-between bg-linear-to-b from-[#7d7d7d] to-[#454545] py-[3px]">
        <Svg w={14} h={5}><path d="M0 .5h14M0 2.500h14M0 4.500h14" stroke="#b0b0b0" strokeDasharray="1 1" /></Svg>
        <button aria-label="关闭命令行"><Svg w={9} h={9}><path d="M1 1l7 7M8 1l-7 7" stroke="#fff" strokeWidth="2" /></Svg></button>
        <button aria-label="自定义"><Svg w={13} h={12}><path d="M1 3.500L3 5l2-1.500L4.500 1C7 1 8 3 7.500 5l5 5-1.500 1.500-5-5C4 7.500 1 6 1 3.500z" fill="#fff" /></Svg></button>
      </div>
      <div className="flex min-w-0 flex-1 flex-col font-['Liberation_Mono','Noto_Sans_CJK_SC',monospace] text-[11px] whitespace-pre text-[#1a1a1a]">
        <div className="flex h-6 items-end border-b border-[#8a8a8a] bg-[#c8c8c8] pl-[2px] leading-[13px]">** 拉伸 **</div>
        <div className="flex h-5 items-center bg-white pt-[2px] pl-1">
          <Svg w={13} h={13}><rect x=".5" y=".5" width="12" height="12" fill="#e6e6ee" stroke="#b9b9c6" /><path d="M3 4l3 2.500L3 9M7 10h4" stroke="#444" /></Svg>
          <span className="pl-0.5">-指定拉伸点或</span>
          <span className="pl-[7px]">[</span>
          <span className="flex gap-1"><Opt t="基点" k="B" /><Opt t="复制" k="C" /><Opt t="放弃" k="U" /><Opt t="退出" k="X" /></span>
          <span>]:</span>
          <span className="ml-1 h-[13px] w-px bg-black" />
          <input aria-label="命令" className="min-w-0 flex-1 bg-transparent outline-none" />
        </div>
      </div>
    </div>
  );
}

/* ---------- status bar ---------- */

const SB = "#4a93e6";
type Cell = { w: string; l: string; sep?: boolean; c: React.ReactNode };
const car: React.ReactNode = <Caret big />;
const CELLS: Cell[] = [
  { w: "w-[22px]", l: "栅格", sep: true, c: <Svg w={13} h={13}><path d="M2.500 0v13M6.500 0v13M10.500 0v13M0 2.500h13M0 6.500h13M0 10.500h13" stroke="#c9c9c9" strokeWidth=".8" /></Svg> },
  { w: "w-5", l: "捕捉", c: <Svg w={14} h={14}>{[1, 4, 7, 10, 13].map((y) => <path key={y} d={`M0 ${y}h14`} stroke="#3f7fd0" strokeWidth="2" strokeDasharray="2 1" />)}</Svg> },
  { w: "w-[15px]", l: "捕捉设置", c: car },
  { w: "w-[22px]", l: "推断约束", sep: true, c: <Svg w={12} h={14}><path d="M5.500 11V1.500h5v4h-5" stroke="#e0e0e0" strokeWidth="1.300" /><circle cx="3.500" cy="11.500" r="2" fill="#e0e0e0" /></Svg> },
  { w: "w-[22px]", l: "动态输入", sep: true, c: <Svg w={15} h={14}><path d="M4 1v7M.5 4.500h7" stroke={SB} strokeWidth="1.500" /><path d="M7 8h8v4H7z" fill="#3b82e0" /></Svg> },
  { w: "w-[21px]", l: "正交", sep: true, c: <Svg w={14} h={14}><path d="M2.500 1v10.500H13M2.500 7h4.500v4.500" stroke={SB} strokeWidth="1.400" /></Svg> },
  { w: "w-5", l: "极轴", c: <Svg w={14} h={14}><circle cx="6.500" cy="7" r="5.500" stroke="#d6d6d6" /><path d="M6.500 7H14M10 4.500L13 7l-3 2.500" stroke="#d6d6d6" /></Svg> },
  { w: "w-[15px]", l: "极轴设置", c: car },
  { w: "w-[19px]", l: "等轴测", c: <Svg w={14} h={14}><path d="M1 1l13 12" stroke="#d6d6d6" /><path d="M7 0v14" stroke="#999" strokeWidth="1.500" /></Svg> },
  { w: "w-[15px]", l: "等轴测设置", c: car },
  { w: "w-5", l: "对象捕捉追踪", sep: true, c: <Svg w={14} h={14}><path d="M13 1L2 12h12" stroke={SB} strokeWidth="1.400" /><path d="M6 6l3 6" stroke={SB} /></Svg> },
  { w: "w-[23px]", l: "对象捕捉", c: <Svg w={15} h={14}><path d="M3.500 3.500h9v9h-9z" stroke={SB} strokeWidth="1.400" /><path d="M1 1h4v4H1z" fill="#22a34a" /></Svg> },
  { w: "w-3", l: "对象捕捉设置", c: car },
  { w: "w-[21px]", l: "线宽", sep: true, c: <Svg w={14} h={13}><path d="M0 2h14" stroke="#ddd" strokeWidth="3" /><path d="M0 6.500h14M0 10h9" stroke="#ddd" strokeWidth="2" /></Svg> },
  { w: "w-[22px]", l: "透明度", sep: true, c: <Svg w={13} h={13}><rect x=".5" y=".5" width="12" height="12" stroke="#ddd" /><path d="M1 5l4-4M1 9l8-8M2 12L12 2M5 12l7-7M9 12l3-3M5 1l7 7M1 1l11 11M1 5l7 7" stroke="#ddd" strokeWidth=".8" /></Svg> },
  { w: "w-[21px]", l: "选择循环", sep: true, c: <Svg w={14} h={14}><path d="M5 5h8v8H5z" fill="#7fae5c" stroke="#b6d79b" /><path d="M1 1h4M3 1v5" stroke="#ddd" strokeWidth="1.300" /></Svg> },
  { w: "w-[21px]", l: "三维对象捕捉", c: <Svg w={14} h={14}><path d="M8 2l5 2.500v6L8 13l-5-2.500v-6zM3 4.500L8 7l5-2.500M8 7v6" stroke={SB} strokeWidth="1.300" /><path d="M1 1h4v4H1z" fill="#22a34a" /></Svg> },
  { w: "w-[15px]", l: "三维捕捉设置", c: car },
  { w: "w-[21px]", l: "动态 UCS", sep: true, c: <Svg w={14} h={14}><path d="M1.500 1v12H13M3 11l9-8M8 2.500h4.500V7" stroke={SB} strokeWidth="1.400" /></Svg> },
  { w: "w-5", l: "选择过滤", c: <Svg w={14} h={14}><path d="M7 1l5.500 3v6L7 13l-5.500-3V4zM1.500 4L7 7l5.500-3M7 7v6" stroke="#c9c9c9" /></Svg> },
  { w: "w-4", l: "过滤设置", c: car },
  { w: "w-[17px]", l: "小控件", c: <Svg w={14} h={14}><circle cx="7" cy="7" r="5.500" stroke="#bfbfbf" /><path d="M7 7V1" stroke="#5fb36a" /><path d="M7 7l4 4" stroke="#d05a4a" strokeWidth="1.300" /><path d="M7 7l-4 4" stroke="#4a93e6" /></Svg> },
  { w: "w-4", l: "小控件设置", c: car },
  { w: "w-[23px]", l: "注释可见性", sep: true, c: <Svg w={15} h={15}><circle cx="8" cy="3" r="2.300" stroke={SB} strokeWidth="1.500" /><path d="M8 5v3L3 14M8 8l5 6M4 7l8-2" stroke={SB} strokeWidth="1.900" /></Svg> },
  { w: "w-5", l: "自动缩放", c: <Svg w={14} h={15}><path d="M6 1l1.500 6.500L12 14 6.500 9.500 1 14l4-6.500z" fill="#d6d6d6" /><path d="M9 1l4 5M12 1L9 6M2 6l4 1" stroke="#d6d6d6" strokeWidth="1.300" /></Svg> },
  { w: "w-[19px]", l: "注释", c: <Svg w={14} h={15}><path d="M7 1l2 7 4 6-6-4-6 4 4-6z" fill="#d6d6d6" /></Svg> },
];
const CELLS2: Cell[] = [
  { w: "w-[23px]", l: "计算器", sep: true, c: <Svg w={9} h={12}><rect x=".5" y=".5" width="8" height="11" stroke="#c9c9c9" /><path d="M2 3.500h5M2 6h5M2 8.500h5" stroke="#c9c9c9" strokeDasharray="1 1" /></Svg> },
  { w: "w-[21px]", l: "锁定用户界面", sep: true, c: <Svg w={15} h={14}><path d="M6 10.500H1v-9h12v3M1 4h12" stroke="#d0d0d0" /><path d="M7 8h6v5H7z" fill="#d0d0d0" /><path d="M9 8V6.500c0-2 4-2 4 0" stroke="#d0d0d0" /></Svg> },
  { w: "w-[14px]", l: "锁定设置", c: car },
  { w: "w-[21px]", l: "隔离对象", sep: true, c: <Svg w={14} h={14}><path d="M1 1h5v5H1zM4 13l3-5 3 5z" stroke="#d0d0d0" /><circle cx="11" cy="7" r="2.500" stroke="#d0d0d0" /></Svg> },
  { w: "w-[21px]", l: "硬件加速", c: <Svg w={15} h={14}><rect width="15" height="14" fill="#23549a" /><circle cx="6" cy="6" r="3" stroke={SB} /><circle cx="10" cy="10" r="2" stroke={SB} /></Svg> },
  { w: "w-[21px]", l: "快捷特性", c: <Svg w={14} h={10}><path d="M0 2h14M0 7h14" stroke="#c0c0c0" strokeWidth="1.500" /></Svg> },
  { w: "w-5", l: "全屏显示", c: <Svg w={15} h={10}><rect width="15" height="10" rx="1" fill="#2f78c8" /></Svg> },
];

const sepCls = "border-l border-[#777]";
const renderCell = (c: Cell) => (
  <button key={c.l} aria-label={c.l} className={`flex shrink-0 items-center justify-center ${c.w} ${c.sep ? sepCls : ""}`}>{c.c}</button>
);

function StatusBar() {
  return (
    <footer className="relative flex h-[22px] shrink-0 bg-[#474747] pt-px text-[11px] leading-none whitespace-nowrap text-[#ececec]">
      <div role="tablist" className="flex w-[348px] shrink-0 items-start bg-[#3a3a3a] pl-2">
        <button role="tab" aria-selected="true" className="flex h-[17px] w-[39px] items-center justify-center bg-[#6d6d6d] font-bold text-white [clip-path:polygon(0_0,100%_0,88%_100%,14%_100%)]">模型</button>
        <button role="tab" aria-selected="false" className="flex h-[17px] w-[46px] items-center justify-center bg-[#525252] text-[#a8a8a8] [clip-path:polygon(0_0,100%_0,88%_100%,10%_100%)]">布局1</button>
        <button aria-label="新建布局" className="ml-1 flex h-[17px] w-6 items-center justify-center bg-[#4a4a4a] [clip-path:polygon(0_0,100%_0,80%_100%,20%_100%)]"><Svg w={8} h={8}><path d="M4 0v8M0 4h8" stroke="#c9c9c9" /></Svg></button>
      </div>
      <button className={`flex w-[62px] shrink-0 items-center justify-center gap-[3px] ${sepCls}`}>比例 1:100<Caret big /></button>
      <div className={`flex w-[157px] shrink-0 items-center justify-end pr-[6px] ${sepCls}`}>1457.3466&lt;270.00, 0.0000</div>
      <button className={`flex w-[25px] shrink-0 items-center justify-center font-bold ${sepCls}`}>模型</button>
      {CELLS.map(renderCell)}
      <button className="flex w-[66px] shrink-0 items-center justify-center gap-1">1:1 / 100%<Caret big /></button>
      <button aria-label="设置" className={`flex w-[23px] shrink-0 items-center justify-center ${sepCls}`}>
        <Svg w={12} h={12}><circle cx="6" cy="6" r="3" stroke="#d6d6d6" strokeWidth="2.200" /><path d="M6 0v12M0 6h12M1.800 1.800l8.400 8.400M10.200 1.800l-8.400 8.400" stroke="#d6d6d6" strokeWidth="1.200" /><circle cx="6" cy="6" r="1.500" fill="#474747" /></Svg>
      </button>
      <button className="flex w-[38px] shrink-0 items-center justify-center gap-[3px] font-bold">草图1<Caret big /></button>
      <button aria-label="自定义" className={`flex w-[27px] shrink-0 items-center justify-center ${sepCls}`}><Svg w={12} h={12}><path d="M6 0v12M0 6h12" stroke="#d6d6d6" strokeWidth="1.400" /></Svg></button>
      <span className={`flex w-[22px] shrink-0 items-center justify-center ${sepCls}`}><Svg w={6} h={13}><path d="M0 0h6v13H0z" fill="#d0d0d0" /><path d="M0 3.500h3M0 6.500h3M0 9.500h3" stroke="#555" /></Svg></span>
      <div className="flex w-[63px] shrink-0 items-center pr-1 pl-1">
        <select aria-label="单位" className="min-w-0 flex-1 appearance-none bg-transparent font-bold"><option>小数</option></select>
        <Caret big />
      </div>
      {CELLS2.map(renderCell)}
      <div className="flex flex-1 items-center justify-end gap-1 pr-[46px]">
        <Svg w={20} h={16}><circle cx="10" cy="9" r="7" fill="#1f5fc0" /></Svg>
        <Svg w={10} h={14}><path d="M5 1c5 0 5 5 2 8H3C0 6 0 1 5 1z" fill="#f2e24a" /><path d="M5 9h5v4H5z" fill="#6abf4b" /></Svg>
      </div>
      <div className="pointer-events-none absolute right-0 bottom-0 flex h-[30px] items-center text-[28px] leading-[30px] font-bold text-[#ececec]/90 [text-shadow:0_0_2px_#8a8a8a]">3D溜溜网</div>
    </footer>
  );
}

export default function App() {
  return (
    <div className={`flex h-screen w-full flex-col overflow-hidden bg-[#4b4b4b] ${CJK}`}>
      <Header />
      <RibbonTabs />
      <Ribbon />
      <div className="flex min-h-0 flex-1">
        <Palette />
        <div className="flex min-w-0 flex-1 flex-col">
          <DocTabs />
          <Canvas />
          <CommandLine />
        </div>
      </div>
      <StatusBar />
    </div>
  );
}
